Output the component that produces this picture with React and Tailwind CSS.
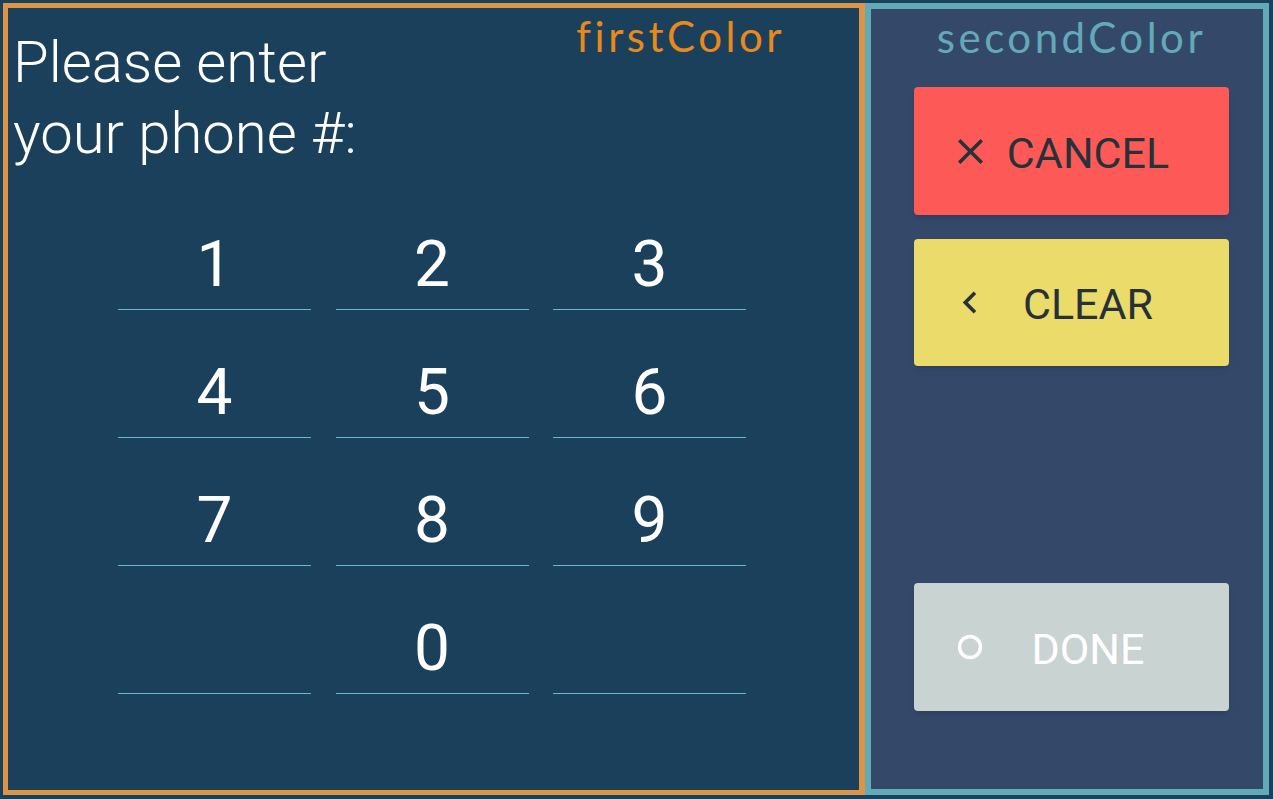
const KEYS = ['1', '2', '3', '4', '5', '6', '7', '8', '9', '', '0', ''];

const CloseIcon = () => (
  <svg width="43" height="43" viewBox="0 0 24 24" fill="currentColor">
    <path d="M19 6.41L17.59 5 12 10.59 6.41 5 5 6.41 10.59 12 5 17.59 6.41 19 12 13.41 17.59 19 19 17.59 13.41 12z" />
  </svg>
);

const ChevronIcon = () => (
  <svg width="45" height="45" viewBox="0 0 24 24" fill="currentColor">
    <path d="M15.41 7.41L14 6l-6 6 6 6 1.41-1.41L10.83 12z" />
  </svg>
);

const CircleIcon = () => (
  <svg width="26" height="26" viewBox="0 0 26 26" fill="none">
    <circle cx="13" cy="13" r="10.5" stroke="white" strokeWidth="3.5" />
  </svg>
);

const ActionButton = ({ icon, label, className, mt }) => (
  <button className={`flex items-center w-[315px] pl-[34px] pr-[45px] rounded-[4px] shadow-md ${mt} ${className}`}>
    <span className="w-[44px] flex justify-center items-center">{icon}</span>
    <span className="flex-1 text-center text-[43px] leading-none pt-[4px]">{label}</span>
  </button>
);

export default function App() {
  return (
    <div
      className="w-[1273px] h-[799px] bg-[#1b405c] flex pt-[3px] pl-[3px] pr-[3px] pb-[4px] overflow-hidden"
      style={{ fontFamily: 'Roboto, "Liberation Sans", sans-serif' }}
    >
      {/* keypad side */}
      <div className="w-[862px] h-full border-[5px] border-r-[6px] border-[#dc9447] bg-[#1b405c] flex flex-col">
        <div className="flex items-start justify-between">
          <h1 className="pl-[5px] pt-[19px] text-[58px] leading-[71px] font-light text-white">
            Please enter
            <br />
            your phone #:
          </h1>
          <span
            className="mr-[74px] pt-[3px] text-[42px] leading-[50px] tracking-[3.5px] text-[#e8891a]"
            style={{ fontFamily: 'Lato, "Open Sans", sans-serif' }}
          >
            firstColor
          </span>
        </div>

        <div className="ml-[110px] mt-[51px] grid grid-cols-[193px_193px_193px] gap-x-[24.5px] gap-y-[38px]">
          {KEYS.map((k, i) => (
            <div
              key={i}
              className="h-[90px] flex items-center justify-center border-b border-[#66b6d6] text-[64px] leading-none text-white"
            >
              {k}
            </div>
          ))}
        </div>
      </div>

      {/* actions side */}
      <div className="w-[404px] h-full border-[6px] border-[#63aab8] bg-[#34496a] flex flex-col pl-[43px] pt-[3px]">
        <span
          className="w-[315px] text-center text-[42px] leading-[50px] tracking-[3.5px] text-[#63aab8]"
          style={{ fontFamily: 'Lato, "Open Sans", sans-serif' }}
        >
          secondColor
        </span>
        <ActionButton
          icon={<CloseIcon />}
          label="CANCEL"
          mt="mt-[25px] h-[128px]"
          className="bg-[#fd5a57] text-[#263238]"
        />
        <ActionButton
          icon={<ChevronIcon />}
          label="CLEAR"
          mt="mt-[24px] h-[127px]"
          className="bg-[#eadb6b] text-[#263238]"
        />
        <ActionButton
          icon={<CircleIcon />}
          label="DONE"
          mt="mt-[217px] h-[128px]"
          className="bg-[#c9d3d2] text-white"
        />
      </div>
    </div>
  );
}
